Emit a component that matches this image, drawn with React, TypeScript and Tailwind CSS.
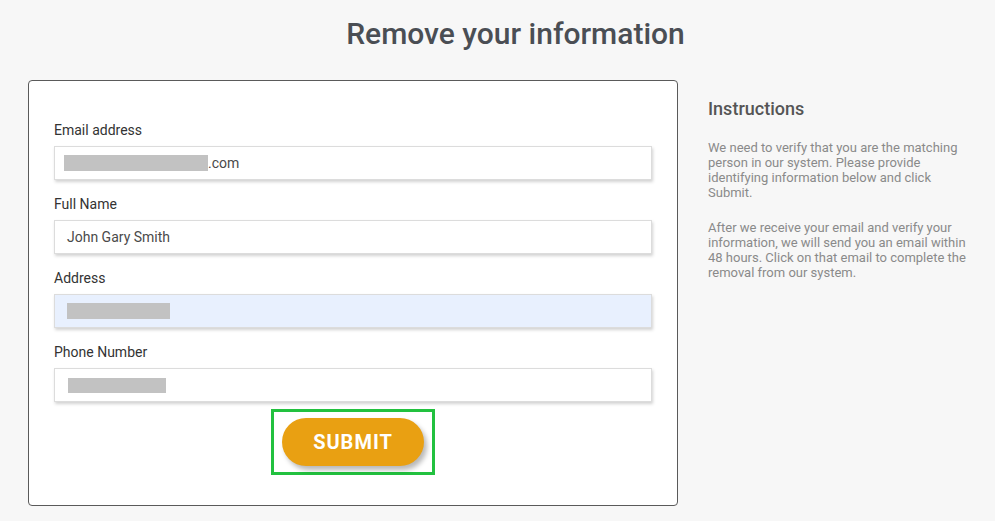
const Field = ({
  label,
  children,
  filled,
}: {
  label: string;
  children: React.ReactNode;
  filled?: boolean;
}) => (
  <div className="flex flex-col">
    <label className="text-[14px] leading-[20px] text-[#333]">{label}</label>
    <div
      className={`mt-[6px] h-[34px] flex items-center px-[12px] border border-[#dcdcdc] shadow-[1px_2px_3px_rgba(0,0,0,0.18)] text-[14px] text-[#4a4a4a] ${
        filled ? "bg-[#e8f0fe]" : "bg-white"
      }`}
    >
      {children}
    </div>
  </div>
);

export default function App() {
  return (
    <div className="min-h-[521px] w-[995px] bg-[#f7f7f7] font-['Roboto',sans-serif] overflow-hidden">
      {/* title */}
      <h1 className="pt-[15px] pl-[36px] text-center text-[30px] leading-[38px] font-medium text-[#4a4e54]">
        Remove your information
      </h1>

      <div className="flex mt-[27px] pl-[28px]">
        {/* form card */}
        <div className="w-[650px] h-[426px] bg-white border border-[#5a5a5a] rounded-[4px] pt-[39px] px-[25px]">
          <div className="flex flex-col gap-[14px]">
            <Field label="Email address">
              <span className="inline-block w-[144px] h-[16px] bg-[#c2c2c2] ml-[-3px]" />
              <span>.com</span>
            </Field>
            <Field label="Full Name">
              <span>John Gary Smith</span>
            </Field>
            <Field label="Address" filled>
              <span className="inline-block w-[103px] h-[16px] bg-[#c2c2c2]" />
            </Field>
            <Field label="Phone Number">
              <span className="inline-block w-[98px] h-[15px] bg-[#c2c2c2] ml-[1px]" />
            </Field>
          </div>

          <div className="flex justify-center mt-[7px]">
            <div className="border-[3px] border-[#22c13f] px-[8px] pt-[6px] pb-[6px]">
              <button className="w-[142px] h-[48px] rounded-full bg-[#e9a012] text-white font-bold text-[20px] tracking-[1px] shadow-[3px_4px_5px_rgba(0,0,0,0.28)]">
                SUBMIT
              </button>
            </div>
          </div>
        </div>

        {/* instructions */}
        <div className="ml-[30px] w-[262px] pt-[18px]">
          <h2 className="text-[18px] leading-[22px] font-medium text-[#555]">Instructions</h2>
          <p className="mt-[20px] text-[13px] leading-[15px] text-[#8a8a8a]">
            We need to verify that you are the matching person in our system. Please provide
            identifying information below and click Submit.
          </p>
          <p className="mt-[20px] text-[13px] leading-[15px] text-[#8a8a8a]">
            After we receive your email and verify your information, we will send you an email
            within 48 hours. Click on that email to complete the removal from our system.
          </p>
        </div>
      </div>
    </div>
  );
}
